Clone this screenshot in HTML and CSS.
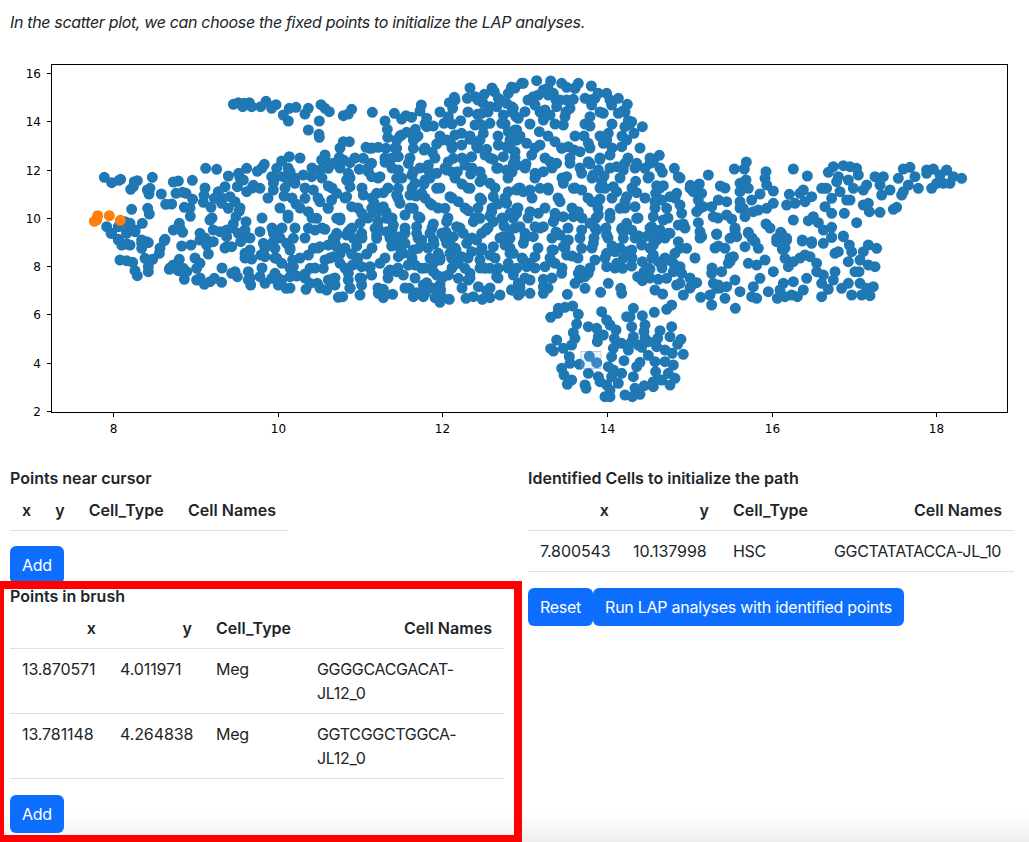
FILE: index.html
```html
<!DOCTYPE html>
<html lang="en">
<head>
    <meta charset="UTF-8">
    <meta name="viewport" content="width=device-width, initial-scale=1.0">
    <title>LAP analyses - fixed points</title>
    <link rel="stylesheet" href="styles.css">
</head>
<body>
    <main>
        <p class="intro">In the scatter plot, we can choose the fixed points to initialize the LAP analyses.</p>

        <!-- Scatter plot: viewBox starts at y=48 so that svg units equal page pixels -->
        <svg class="plot" viewBox="0 48 1029 392" width="1029" height="392">
            <!-- dense middle of the cloud, in page pixels -->
            <path class="dots-page" d="M470 88h0M492 88h0M515 88h0M548 88h0M575 88h0M455 100h0M478 100h0M500 100h0M528 100h0M556 100h0M590 100h0M610 100h0M440 112h0M468 112h0M488 112h0M512 112h0M540 112h0M566 112h0M600 112h0M625 112h0M425 124h0M452 124h0M480 124h0M505 124h0M530 124h0M555 124h0M585 124h0M612 124h0M630 124h0M400 136h0M418 136h0M440 136h0M470 136h0M498 136h0M520 136h0M548 136h0M575 136h0M600 136h0M622 136h0M340 148h0M372 148h0M395 148h0M425 148h0M452 148h0M478 148h0M510 148h0M535 148h0M562 148h0M590 148h0M612 148h0M640 148h0
            M300 158h0M325 158h0M355 158h0M385 158h0M410 158h0M435 158h0M462 158h0M490 158h0M515 158h0M545 158h0M570 158h0M600 158h0M628 158h0M650 158h0M262 168h0M288 168h0M312 168h0M340 168h0M368 168h0M392 168h0M420 168h0M445 168h0M472 168h0M498 168h0M525 168h0M552 168h0M580 168h0M610 168h0M635 168h0M660 168h0M240 178h0M275 178h0M295 178h0M322 178h0M350 178h0M378 178h0M402 178h0M430 178h0M455 178h0M482 178h0M508 178h0M535 178h0M562 178h0M592 178h0M620 178h0M648 178h0M680 178h0
            M205 188h0M252 188h0M285 188h0M305 188h0M332 188h0M362 188h0M388 188h0M412 188h0M440 188h0M468 188h0M495 188h0M520 188h0M548 188h0M575 188h0M600 188h0M632 188h0M660 188h0M690 188h0M725 188h0M222 198h0M268 198h0M292 198h0M318 198h0M345 198h0M372 198h0M398 198h0M425 198h0M452 198h0M480 198h0M505 198h0M532 198h0M558 198h0M588 198h0M612 198h0M645 198h0M675 198h0M190 208h0M240 208h0M280 208h0M300 208h0M328 208h0M358 208h0M382 208h0M410 208h0M438 208h0M465 208h0M492 208h0M518 208h0M545 208h0M572 208h0M598 208h0M625 208h0M655 208h0M700 208h0M740 208h0
            M212 218h0M262 218h0M288 218h0M312 218h0M340 218h0M368 218h0M392 218h0M420 218h0M448 218h0M475 218h0M502 218h0M528 218h0M555 218h0M582 218h0M610 218h0M638 218h0M668 218h0M718 218h0M180 228h0M232 228h0M272 228h0M295 228h0M322 228h0M352 228h0M378 228h0M405 228h0M432 228h0M460 228h0M488 228h0M515 228h0M540 228h0M568 228h0M595 228h0M622 228h0M650 228h0M685 228h0M735 228h0M770 228h0M205 238h0M250 238h0M280 238h0M305 238h0M335 238h0M362 238h0M390 238h0M418 238h0M445 238h0M472 238h0M500 238h0M525 238h0M552 238h0M580 238h0M608 238h0M635 238h0M665 238h0M700 238h0M752 238h0
            M160 248h0M225 248h0M265 248h0M290 248h0M318 248h0M345 248h0M372 248h0M400 248h0M428 248h0M455 248h0M482 248h0M510 248h0M538 248h0M565 248h0M592 248h0M620 248h0M650 248h0M680 248h0M715 248h0M785 248h0M195 258h0M245 258h0M275 258h0M300 258h0M330 258h0M358 258h0M385 258h0M412 258h0M440 258h0M468 258h0M495 258h0M522 258h0M550 258h0M578 258h0M605 258h0M632 258h0M665 258h0M695 258h0M730 258h0M800 258h0M170 268h0M222 268h0M262 268h0M290 268h0M315 268h0M345 268h0M370 268h0M398 268h0M425 268h0M452 268h0M480 268h0M508 268h0M535 268h0M562 268h0M590 268h0M615 268h0M648 268h0M678 268h0M712 268h0
            M200 278h0M250 278h0M278 278h0M305 278h0M335 278h0M360 278h0M388 278h0M415 278h0M442 278h0M470 278h0M498 278h0M525 278h0M552 278h0M580 278h0M650 278h0M690 278h0M290 288h0M320 288h0M350 288h0M378 288h0M405 288h0M432 288h0M462 288h0M490 288h0M520 288h0M548 288h0M690 288h0M720 288h0
            M284 196h0M296 204h0M288 215h0M282 228h0M374 203h0M386 212h0M378 222h0M392 230h0M412 175h0M424 184h0M416 196h0M432 205h0M478 208h0M490 216h0M504 226h0M486 230h0M498 204h0M556 232h0M566 242h0M552 250h0M572 256h0M596 218h0M606 228h0M594 238h0M612 246h0M652 258h0M662 268h0M644 272h0M512 172h0M526 164h0M536 176h0M452 172h0M462 184h0M574 150h0M590 164h0M604 176h0M446 232h0M434 244h0M456 250h0M348 232h0M336 246h0" />
            <!-- the points are traced per quadrant, in coordinates 3x the page size -->
            <g transform="scale(.33333)">
                <path class="dots dots-blue" d="M700 313h0M715 308h0M733 310h0M748 308h0M728 320h0M755 320h0M782 320h0M798 304h0M815 325h0M828 314h0M850 345h0M868 325h0M888 322h0M865 363h0M915 342h0M925 325h0M925 390h0M957 403h0M958 412h0M958 363h0M963 314h0M975 325h0M988 335h0M1030 347h0M1045 342h0M1055 328h0M1117 337h0M1155 363h0M1162 388h0M1163 412h0M1183 340h0M1205 357h0M1218 347h0M1235 352h0M1246 388h0M1264 315h0M1260 333h0M1280 355h0M1280 380h0M1300 378h0M1332 370h0M1345 350h0M1358 325h0M1348 308h0M1363 292h0M1402 295h0M1425 290h0M1453 283h0M1483 275h0M1495 295h0M1448 308h0M1470 320h0M1490 320h0M1525 280h0M1535 262h0M1565 250h0M1520 310h0M1540 325h0M1548 350h0M1510 345h0M1505 370h0M1470 370h0M1450 378h0M1425 375h0M1432 343h0M1445 340h0M1382 362h0M1450 400h0M1440 420h0M1525 395h0M1550 390h0M1530 420h0
                M313 532h0M335 548h0M357 541h0M362 538h0M392 568h0M400 560h0M412 542h0M403 545h0M457 532h0M442 570h0M450 565h0M447 582h0M484 582h0M497 613h0M515 612h0M520 546h0M535 543h0M577 541h0M528 580h0M548 577h0M558 580h0M578 598h0M612 586h0M610 607h0M553 622h0M633 622h0M571 649h0M643 595h0M655 575h0M675 560h0M617 505h0M650 508h0M685 528h0M716 520h0M740 505h0M730 540h0M712 560h0M740 575h0M760 556h0M780 565h0M772 514h0M793 493h0M845 483h0M868 470h0M830 505h0M870 515h0M850 530h0M815 530h0M820 550h0M865 545h0M820 570h0M690 590h0M705 605h0M665 610h0M685 625h0M718 633h0M708 650h0M738 665h0M700 672h0M680 690h0M630 660h0M640 690h0M600 700h0M660 695h0M735 690h0M520 690h0M548 697h0M538 670h0M395 628h0M443 625h0M448 642h0M427 670h0M320 680h0M335 700h0M355 680h0M375 665h0M390 670h0M405 690h0M380 697h0M355 718h0M495 718h0M425 720h0M440 725h0
                M1030 425h0M1048 425h0M1098 442h0M1110 445h0M1135 442h0M1158 445h0M1190 420h0M1205 405h0M1220 397h0M1240 420h0M1245 415h0M1310 432h0M1325 420h0M1340 420h0M1365 405h0M1385 400h0M1410 418h0M1430 440h0M1460 448h0M1495 435h0M1520 440h0M1545 420h0M1190 445h0M1240 445h0M1272 450h0M1297 457h0M1355 435h0M1385 435h0M1415 470h0M1455 465h0M1480 478h0M1510 470h0M1545 455h0
                M975 465h0M965 480h0M1018 472h0M1030 480h0M1050 488h0M1090 475h0M1115 490h0M1155 487h0M1175 475h0M1195 470h0M1225 490h0M1285 495h0M1285 510h0M1345 485h0M1360 475h0M1395 495h0M1440 515h0M1490 505h0M1520 510h0M1550 495h0M885 550h0M910 525h0M935 530h0M960 510h0M985 505h0M1000 490h0M1045 520h0M1040 540h0M1050 560h0M1078 508h0M1105 515h0M1115 530h0M1140 530h0M1195 510h0M1190 535h0M1195 565h0M1240 515h0M1245 550h0M1275 540h0M1310 520h0M1340 510h0M1372 515h0M1412 522h0M1440 545h0M1470 550h0M1525 575h0M1555 565h0
                M915 595h0M940 570h0M985 558h0M1010 580h0M1040 590h0M1090 585h0M1130 580h0M1150 578h0M1190 585h0M1230 585h0M1265 580h0M1310 565h0M1350 590h0M1410 565h0M1445 600h0M1480 590h0M1520 610h0M1550 625h0M960 605h0M995 600h0M985 625h0M1055 620h0M1085 640h0M1115 625h0M1150 620h0M1200 610h0M1240 625h0M1290 610h0M1335 625h0M1375 605h0M1405 632h0M1440 655h0M1475 635h0M1510 655h0M1540 655h0
                M925 635h0M950 655h0M1010 655h0M1020 660h0M1080 670h0M1130 640h0M1160 655h0M1180 675h0M1215 645h0M1255 650h0M1300 672h0M1340 665h0M1370 680h0M1420 665h0M1480 665h0M1530 690h0M925 685h0M945 690h0M975 688h0M1010 700h0M1050 690h0M1085 700h0M1125 685h0M1160 695h0M1215 700h0M1250 680h0M1290 700h0M1325 700h0M1390 700h0M1445 700h0M1510 710h0M1000 715h0M1060 715h0M1130 715h0M1195 718h0M1265 720h0M1350 720h0M1430 720h0" />
                <path class="dots dots-orange" d="M283 664h0M293 647h0M290 660h0M328 647h0M361 661h0M287 662h0" />
            </g>
            <g transform="translate(510 0) scale(.33333)">
                <path class="dots dots-blue" d="M5 262h0M40 250h0M80 242h0M122 243h0M155 250h0M170 262h0M205 250h0M195 265h0M244 258h0M290 280h0M265 280h0M255 295h0M325 295h0M305 315h0M352 313h0M70 290h0M85 285h0M100 270h0M115 285h0M130 280h0M75 315h0M150 300h0M170 300h0M190 298h0M225 295h0M245 315h0M140 320h0M180 325h0M105 330h0M45 335h0M25 355h0M5 320h0M100 360h0M120 345h0M165 350h0M240 350h0M240 378h0M280 340h0M325 340h0M340 332h0M355 362h0M365 365h0M345 380h0M397 380h0M160 375h0M88 395h0M295 400h0M290 420h0M372 400h0M350 420h0M335 440h0M222 408h0M235 430h0M210 455h0M135 425h0M155 445h0M175 440h0M15 390h0M20 420h0M50 430h0M90 435h0M65 465h0M45 500h0M10 490h0M280 430h0M300 465h0M270 478h0M235 485h0M120 485h0M140 490h0M180 490h0M215 520h0M100 515h0M75 520h0M345 490h0M380 490h0M420 490h0M405 505h0M430 487h0M448 466h0M320 500h0M340 510h0M265 510h0M250 525h0M170 530h0M160 550h0M190 565h0M215 570h0M275 545h0M285 565h0M310 560h0M320 575h0M377 544h0M380 578h0M350 590h0M345 605h0M418 530h0M457 517h0M493 505h0M505 530h0M440 557h0M460 557h0M437 580h0M435 605h0M455 600h0M480 590h0M500 580h0M510 615h0M470 625h0M515 640h0M505 675h0M460 660h0M430 650h0M425 680h0M450 690h0M480 700h0M520 672h0M380 655h0M350 670h0M365 690h0M375 620h0M330 625h0M300 640h0M265 645h0M245 605h0M270 597h0M205 635h0M190 650h0M160 650h0M150 605h0M135 640h0M115 570h0M90 565h0M60 570h0M40 575h0M20 570h0M60 635h0M85 640h0M75 680h0M100 680h0M130 665h0M30 680h0M45 700h0M70 710h0M0 640h0M20 640h0M215 690h0M240 670h0M260 690h0M290 705h0M335 688h0M340 715h0M175 720h0M150 705h0M385 708h0
                M570 695h0M620 703h0M675 690h0M680 710h0M715 697h0M565 668h0M595 525h0M541 556h0M568 552h0M550 575h0M575 580h0M565 600h0M580 620h0M560 635h0M605 620h0M625 600h0M650 605h0M610 650h0M650 645h0M665 657h0M690 605h0M700 625h0M705 650h0M730 635h0M745 630h0M770 625h0M790 610h0M725 600h0M750 582h0M770 555h0M790 573h0M690 550h0M708 540h0M715 565h0M690 575h0M673 507h0M703 507h0M709 486h0M768 515h0M765 535h0M631 558h0M850 507h0M892 528h0M838 583h0M880 570h0M870 580h0M830 615h0M855 610h0M885 605h0M905 590h0M935 565h0M950 565h0M965 595h0M945 620h0M965 640h0M1003 640h0M1040 668h0M850 660h0M895 662h0M910 650h0M925 668h0M940 690h0M965 682h0M768 672h0M812 697h0M800 715h0M830 715h0M877 720h0M905 725h0M965 712h0M1000 708h0
                M955 517h0M970 500h0M1000 497h0M1020 500h0M1040 505h0M985 530h0M1015 540h0M1045 525h0M980 545h0M945 565h0M990 575h0M1030 565h0M1010 600h0M1020 600h0M1060 570h0M1070 555h0M1095 530h0M1120 530h0M1110 555h0M1140 570h0M1115 585h0M1075 610h0M1060 615h0M1078 635h0M1110 637h0M1150 628h0M1160 622h0M1165 535h0M1180 507h0M1200 502h0M1215 530h0M1195 555h0M1225 565h0M1180 575h0M1175 585h0M1250 510h0M1270 507h0M1265 565h0M1290 525h0M1310 510h0M1300 550h0M1320 550h0M1330 530h0M1355 535h0M1250 520h0M1280 550h0" />
            </g>
            <g transform="translate(0 230) scale(.33333)">
                <path class="dots dots-blue" d="M333 10h0M355 30h0M380 10h0M405 5h0M365 45h0M390 45h0M380 42h0M425 40h0M445 38h0M425 55h0M493 32h0M545 48h0M573 45h0M478 70h0M360 90h0M380 92h0M398 97h0M435 85h0M458 88h0M445 110h0M445 125h0M405 122h0M412 137h0M508 118h0M520 105h0M538 88h0M535 122h0M550 115h0M560 125h0M553 148h0M590 150h0M613 163h0M630 155h0M643 145h0M665 157h0M590 115h0M600 100h0M625 72h0M600 30h0M630 35h0M620 45h0M640 35h0M680 50h0M695 50h0M680 20h0M715 10h0M730 25h0M722 35h0M735 70h0M750 60h0M755 87h0M783 75h0M795 80h0M790 40h0M820 35h0M825 55h0M830 85h0M845 100h0M878 90h0M880 110h0M870 60h0M860 40h0M880 25h0M820 10h0M780 5h0M695 130h0M705 125h0M712 140h0M745 125h0M745 150h0M752 165h0M780 140h0M795 160h0M815 145h0M825 130h0M835 165h0M845 150h0M858 175h0M870 140h0M890 138h0M915 132h0M930 115h0M918 178h0M930 160h0M952 160h0M985 150h0M997 147h0M1005 165h0M970 115h0M975 90h0M1000 80h0M1020 72h0M1020 100h0M925 75h0M940 55h0M960 50h0M985 45h0M1005 40h0M1055 72h0M1058 105h0M1045 130h0M1045 150h0M1050 175h0M1085 145h0M1085 165h0M1080 195h0M1015 202h0M1028 200h0M980 180h0M1135 190h0M1150 178h0M1150 203h0M1178 193h0M1100 72h0M1070 48h0M1085 20h0M1040 15h0M1010 15h0M1130 15h0M1115 135h0M1085 110h0M1110 110h0M1140 100h0M1165 125h0M1170 120h0M1190 125h0M1195 80h0M1175 48h0M1210 70h0M1215 40h0M1240 60h0M1255 55h0M1225 105h0M1245 105h0M1265 115h0M1210 135h0M1228 175h0M1240 200h0M1250 188h0M1270 200h0M1275 190h0M1280 158h0M1270 165h0M1290 85h0M1300 100h0M1320 90h0M1315 70h0M1300 125h0M1310 135h0M1330 140h0M1320 165h0M1322 180h0M1305 203h0M1320 217h0M1330 205h0M1348 208h0M1350 70h0M1355 85h0M1375 100h0M1385 80h0M1345 135h0M1375 145h0M1405 150h0M1410 130h0M1395 115h0M1398 205h0M1420 200h0M1447 208h0M1470 203h0M1500 195h0M1435 170h0M1460 182h0M1455 115h0M1470 115h0M1490 140h0M1495 115h0M1440 90h0M1415 65h0M1440 65h0M1470 75h0M1480 50h0M1515 45h0M1530 70h0M1525 100h0M1540 135h0M1535 180h0M1555 160h0M1555 195h0M1400 40h0M1360 20h0M1250 10h0M1200 20h0M1300 30h0M1340 40h0" />
            </g>
            <g transform="translate(510 230) scale(.33333)">
                <path class="dots dots-blue" d="M340 5h0M385 18h0M412 18h0M440 10h0M475 10h0M395 45h0M430 45h0M430 75h0M440 30h0M505 35h0M530 55h0M575 20h0M620 12h0M660 25h0M675 10h0M715 10h0M735 35h0M745 55h0M705 50h0M625 48h0M645 55h0M800 35h0M815 12h0M830 30h0M817 58h0M877 33h0M905 40h0M940 40h0M965 22h0M1000 20h0M1018 45h0M1025 65h0M1075 45h0M1100 55h0M1060 65h0M1050 90h0M1015 95h0M975 70h0M985 65h0M1095 110h0M1075 105h0M1047 125h0M1035 125h0
                M0 25h0M40 40h0M10 70h0M40 90h0M75 80h0M50 110h0M20 115h0M60 150h0M30 160h0M105 110h0M135 100h0M155 130h0M100 148h0M130 60h0M160 50h0M170 75h0M215 55h0M250 40h0M290 70h0M255 90h0M290 110h0M320 100h0M315 65h0M350 65h0M340 85h0M365 60h0M397 95h0M365 108h0M338 115h0M383 140h0M397 152h0M420 118h0M445 95h0M475 90h0M495 70h0M490 100h0M510 110h0M515 130h0M490 125h0M470 145h0M445 148h0M435 180h0M458 192h0M500 165h0M520 195h0M510 160h0M545 165h0M560 158h0M572 202h0M605 130h0M610 160h0M635 125h0M625 165h0M600 195h0M605 225h0M620 175h0M645 205h0M650 170h0M675 150h0M690 185h0M676 235h0M660 95h0M670 80h0M655 100h0M715 100h0M740 105h0M765 90h0M790 125h0M750 145h0M730 170h0M725 200h0M740 205h0M775 185h0M802 205h0M825 200h0M845 195h0M862 200h0M880 180h0M890 145h0M850 155h0M820 160h0M810 180h0M835 110h0M850 95h0M825 85h0M885 75h0M900 80h0M920 100h0M920 125h0M940 135h0M935 160h0M955 178h0M935 200h0M975 125h0M970 150h0M995 175h0M1015 160h0M1025 195h0M1050 160h0M1055 195h0M1080 197h0M1090 170h0M1070 175h0
                M210 120h0M225 140h0M195 160h0M225 175h0M172 193h0M272 187h0M295 160h0M332 175h0M335 190h0M205 130h0M235 130h0M30 190h0M5 180h0M60 190h0M100 190h0M100 170h0M60 100h0
                M122 262h0M145 235h0M143 250h0M165 232h0M188 228h0M205 253h0M200 282h0M190 308h0M195 325h0M185 345h0M160 355h0M140 330h0M122 356h0M130 363h0M178 380h0M180 400h0M208 403h0M155 415h0M162 435h0M185 450h0M172 463h0M235 290h0M260 295h0M265 320h0M262 335h0M280 315h0M275 245h0M290 270h0M300 285h0M318 300h0M313 325h0M310 355h0M305 380h0M335 340h0M355 360h0M350 260h0M370 235h0M360 260h0M365 290h0M370 320h0M365 335h0M385 345h0M395 352h0M397 257h0M433 247h0M470 238h0M485 225h0M405 285h0M402 305h0M405 325h0M415 335h0M450 302h0M485 290h0M480 320h0M513 328h0M503 343h0M443 325h0M440 350h0M465 360h0M487 370h0M520 373h0M415 376h0M435 395h0M465 395h0M490 405h0M437 425h0M475 430h0M495 445h0M480 465h0M430 470h0M430 455h0M455 450h0M403 467h0M370 440h0M390 397h0M380 410h0M342 392h0M295 410h0M310 420h0M335 430h0M305 440h0M325 460h0M235 430h0M225 465h0M228 475h0M265 440h0M270 455h0M290 465h0M300 480h0M285 500h0M300 500h0M345 495h0M367 500h0M390 493h0M375 475h0M238 379h0M260 398h0" />
            </g>

            <!-- brush selection -->
            <rect class="brush" x="581" y="351.5" width="20" height="17" />

            <rect class="axes" x="51.5" y="64.5" width="956" height="348" />
            <path class="ticks" d="M47 73.5h4M47 121.5h4M47 170.5h4M47 218.5h4M47 266.5h4M47 314.5h4M47 363.5h4M47 411.5h4M113.5 413v4M278.5 413v4M442.5 413v4M607.5 413v4M772.5 413v4M936.5 413v4" />
            <g class="tick-labels-y">
                <text x="41" y="77.5">16</text>
                <text x="41" y="125.5">14</text>
                <text x="41" y="174.5">12</text>
                <text x="41" y="222.5">10</text>
                <text x="41" y="270.5">8</text>
                <text x="41" y="318.5">6</text>
                <text x="41" y="367.5">4</text>
                <text x="41" y="415.5">2</text>
            </g>
            <g class="tick-labels-x">
                <text x="113.5" y="433">8</text>
                <text x="278.5" y="433">10</text>
                <text x="442.5" y="433">12</text>
                <text x="607.5" y="433">14</text>
                <text x="772.5" y="433">16</text>
                <text x="936.5" y="433">18</text>
            </g>
        </svg>

        <div class="tables">
            <section class="col-left">
                <h2 class="table-title">Points near cursor</h2>
                <table class="cells cells-empty">
                    <thead>
                        <tr><th>x</th><th>y</th><th class="type">Cell_Type</th><th>Cell Names</th></tr>
                    </thead>
                </table>
                <button class="btn" type="button">Add</button>

                <h2 class="table-title">Points in brush</h2>
                <table class="cells cells-brush">
                    <thead>
                        <tr><th class="col-x">x</th><th class="col-y">y</th><th class="type col-type">Cell_Type</th><th>Cell Names</th></tr>
                    </thead>
                    <tbody>
                        <tr><td class="num">13.870571</td><td class="num">4.011971</td><td>Meg</td><td>GGGGCACGACAT-JL12_0</td></tr>
                        <tr><td class="num">13.781148</td><td class="num">4.264838</td><td>Meg</td><td>GGTCGGCTGGCA-JL12_0</td></tr>
                    </tbody>
                </table>
                <button class="btn" type="button">Add</button>
            </section>

            <section class="col-right">
                <h2 class="table-title">Identified Cells to initialize the path</h2>
                <table class="cells cells-identified">
                    <thead>
                        <tr><th class="col-x">x</th><th class="col-y">y</th><th class="type col-type">Cell_Type</th><th>Cell Names</th></tr>
                    </thead>
                    <tbody>
                        <tr><td class="num">7.800543</td><td class="num">10.137998</td><td>HSC</td><td>GGCTATATACCA-JL_10</td></tr>
                    </tbody>
                </table>
                <div class="actions">
                    <button class="btn" type="button">Reset</button>
                    <button class="btn" type="button">Run LAP analyses with identified points</button>
                </div>
            </section>
        </div>
    </main>

    <!-- overlays from the screenshot: shadow at the window edge and the red marker box -->
    <div class="window-fade"></div>
    <div class="marker-box"></div>
</body>
</html>
```

FILE: styles.css
```css
/* General */
html, body {
    height: 842px;
    overflow: hidden;
}

body {
    position: relative;
    margin: 0;
    font-family: Inter, "Liberation Sans", Arial, sans-serif;
    font-size: 16px;
    line-height: 24px;
    color: #212529;
    background-color: #fff;
}

main {
    position: relative;
    z-index: 1;
}

.intro {
    margin: 10px 0 14px;
    padding: 0 10px;
    font-style: italic;
    letter-spacing: -0.34px;
}

/* Scatter plot */
.plot {
    display: block;
}

.dots {
    fill: none;
    stroke-width: 33;
    stroke-linecap: round;
}

.dots-page {
    fill: none;
    stroke: #1f77b4;
    stroke-width: 11;
    stroke-linecap: round;
}

.dots-blue {
    stroke: #1f77b4;
}

.dots-orange {
    stroke: #ff7f0e;
}

.brush {
    fill: #99ccff;
    fill-opacity: 0.2;
    stroke: #6688aa;
    stroke-opacity: 0.4;
}

.axes {
    fill: none;
    stroke: #000;
}

.ticks {
    fill: none;
    stroke: #000;
}

.tick-labels-y,
.tick-labels-x {
    font-family: "DejaVu Sans", sans-serif;
    font-size: 12px;
    fill: #000;
}

.tick-labels-y {
    text-anchor: end;
}

.tick-labels-x {
    text-anchor: middle;
}

/* Tables */
.tables {
    display: flex;
    margin-top: 26px;
    padding: 0 10px;
}

.col-left {
    flex: 0 0 508px;
    padding-right: 14px;
    box-sizing: border-box;
}

.col-right {
    flex: 0 0 486px;
    margin-left: 10px;
}

.table-title {
    margin: 0;
    font-size: 16px;
    line-height: 24px;
    font-weight: 600;
}

.cells {
    width: 100%;
    border-collapse: collapse;
}

.cells-empty {
    width: 278px;
    margin-bottom: -1px;
}

.cells-brush,
.cells-identified {
    table-layout: fixed;
}

.cells th,
.cells td {
    padding: 8px 12px;
    text-align: left;
    vertical-align: top;
    border-bottom: 1px solid #dee2e6;
    font-weight: 400;
    letter-spacing: -0.32px;
}

.cells td.num {
    letter-spacing: -0.1px;
}

.cells th {
    font-weight: 600;
    text-align: right;
    letter-spacing: 0.03px;
}

.cells th.type {
    text-align: left;
}

.cells-brush .col-x {
    width: 74px;
}

.cells-brush .col-y {
    width: 72px;
}

.cells-brush .col-type {
    width: 77px;
}

.cells-identified .col-x {
    width: 69px;
}

.cells-identified .col-y {
    width: 76px;
}

.cells-identified .col-type {
    width: 77px;
}

/* Buttons */
.btn {
    display: block;
    margin: 16px 0 0;
    padding: 7px 12px;
    font-family: inherit;
    font-size: 16px;
    line-height: 24px;
    letter-spacing: -0.26px;
    color: #fff;
    background-color: #0d6efd;
    border: none;
    border-radius: 6px;
    cursor: pointer;
}

.actions {
    display: flex;
    margin-top: 16px;
}

.actions .btn {
    margin: 0;
}

/* Overlays */
.window-fade {
    position: absolute;
    left: 0;
    right: 0;
    bottom: 0;
    height: 29px;
    background: linear-gradient(to bottom, rgba(238, 238, 238, 0), #eeeeee);
}

.marker-box {
    position: absolute;
    z-index: 2;
    left: 0;
    top: 581px;
    width: 522px;
    height: 261px;
    box-sizing: border-box;
    border-style: solid;
    border-color: #ff0000;
    border-width: 8px 8px 7px 4px;
}
```
